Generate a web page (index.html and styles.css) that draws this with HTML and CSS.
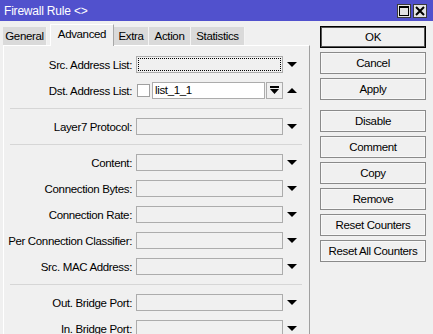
FILE: index.html
```html
<!DOCTYPE html>
<html lang="en">
<head>
    <meta charset="UTF-8">
    <title>Firewall Rule</title>
    <link rel="stylesheet" href="styles.css">
</head>
<body>
    <div class="window">
        <div class="titlebar">
            <span class="title">Firewall Rule &lt;&gt;</span>
            <div class="win-buttons">
                <span class="win-btn">
                    <svg width="10" height="10" viewBox="0 0 10 10"><rect x="0.5" y="0.5" width="9" height="9" fill="none" stroke="#000" stroke-width="1"/><rect x="0" y="0" width="10" height="2" fill="#000"/></svg>
                </span>
                <span class="win-btn">
                    <svg width="10" height="10" viewBox="0 0 10 10"><path d="M1 1 L9 9 M9 1 L1 9" stroke="#000" stroke-width="2"/></svg>
                </span>
            </div>
        </div>

        <div class="main">
            <div class="left">
                <div class="tabs">
                    <div class="tab tab-general">General</div>
                    <div class="tab tab-advanced active">Advanced</div>
                    <div class="tab tab-extra">Extra</div>
                    <div class="tab tab-action">Action</div>
                    <div class="tab tab-stats">Statistics</div>
                </div>

                <div class="panel">
                    <div class="row">
                        <label>Src. Address List:</label>
                        <div class="field focused"></div>
                        <span class="arrow"><svg width="10" height="6" viewBox="0 0 10 6"><polygon points="0,0 10,0 5,5" fill="#000"/></svg></span>
                    </div>
                    <div class="row">
                        <label>Dst. Address List:</label>
                        <div class="combo">
                            <span class="check"></span>
                            <div class="field white">list_1_1</div>
                            <span class="mini-btn"><svg width="9" height="9" viewBox="0 0 9 9"><rect x="0" y="0" width="9" height="2" fill="#000"/><polygon points="0,3 9,3 4.5,8" fill="#000"/></svg></span>
                        </div>
                        <span class="arrow"><svg width="10" height="6" viewBox="0 0 10 6"><polygon points="0,5 10,5 5,0" fill="#000"/></svg></span>
                    </div>

                    <div class="sep"></div>

                    <div class="row">
                        <label>Layer7 Protocol:</label>
                        <div class="field"></div>
                        <span class="arrow"><svg width="10" height="6" viewBox="0 0 10 6"><polygon points="0,0 10,0 5,5" fill="#000"/></svg></span>
                    </div>

                    <div class="sep"></div>

                    <div class="row">
                        <label>Content:</label>
                        <div class="field"></div>
                        <span class="arrow"><svg width="10" height="6" viewBox="0 0 10 6"><polygon points="0,0 10,0 5,5" fill="#000"/></svg></span>
                    </div>
                    <div class="row">
                        <label>Connection Bytes:</label>
                        <div class="field"></div>
                        <span class="arrow"><svg width="10" height="6" viewBox="0 0 10 6"><polygon points="0,0 10,0 5,5" fill="#000"/></svg></span>
                    </div>
                    <div class="row">
                        <label>Connection Rate:</label>
                        <div class="field"></div>
                        <span class="arrow"><svg width="10" height="6" viewBox="0 0 10 6"><polygon points="0,0 10,0 5,5" fill="#000"/></svg></span>
                    </div>
                    <div class="row">
                        <label>Per Connection Classifier:</label>
                        <div class="field"></div>
                        <span class="arrow"><svg width="10" height="6" viewBox="0 0 10 6"><polygon points="0,0 10,0 5,5" fill="#000"/></svg></span>
                    </div>
                    <div class="row">
                        <label>Src. MAC Address:</label>
                        <div class="field"></div>
                        <span class="arrow"><svg width="10" height="6" viewBox="0 0 10 6"><polygon points="0,0 10,0 5,5" fill="#000"/></svg></span>
                    </div>

                    <div class="sep"></div>

                    <div class="row">
                        <label>Out. Bridge Port:</label>
                        <div class="field"></div>
                        <span class="arrow"><svg width="10" height="6" viewBox="0 0 10 6"><polygon points="0,0 10,0 5,5" fill="#000"/></svg></span>
                    </div>
                    <div class="row">
                        <label>In. Bridge Port:</label>
                        <div class="field"></div>
                        <span class="arrow"><svg width="10" height="6" viewBox="0 0 10 6"><polygon points="0,0 10,0 5,5" fill="#000"/></svg></span>
                    </div>
                </div>
            </div>

            <div class="actions">
                <button class="btn default">OK</button>
                <button class="btn">Cancel</button>
                <button class="btn">Apply</button>
                <button class="btn spaced">Disable</button>
                <button class="btn">Comment</button>
                <button class="btn">Copy</button>
                <button class="btn">Remove</button>
                <button class="btn">Reset Counters</button>
                <button class="btn">Reset All Counters</button>
            </div>
        </div>
    </div>
</body>
</html>
```

FILE: styles.css
```css
* {
    margin: 0;
    padding: 0;
    box-sizing: border-box;
}

body {
    font-family: 'Liberation Sans', Arial, sans-serif;
    font-size: 11.5px;
    letter-spacing: -0.35px;
    color: #000;
    background: #f0f0f0;
}

.window {
    width: 433px;
    height: 334px;
    overflow: hidden;
    background: #f0f0f0;
}

.titlebar {
    height: 21px;
    background: #5151cd;
    color: #fff;
    display: flex;
    align-items: center;
    justify-content: space-between;
    padding: 0 6px 0 4px;
}

.title {
    font-size: 12px;
    letter-spacing: -0.2px;
}

.win-buttons {
    display: flex;
    gap: 2px;
}

.win-btn {
    width: 14px;
    height: 14px;
    background: #e4e4e4;
    border: 1px solid #3a3a3a;
    display: flex;
    align-items: center;
    justify-content: center;
}

.main {
    display: flex;
    padding-left: 3px;
}

.left {
    width: 307px;
}

/* tabs */
.tabs {
    display: flex;
    align-items: flex-end;
    height: 24px;
    padding-top: 2px;
}

.tab {
    height: 18px;
    line-height: 18px;
    background: #dadada;
    border-right: 1px solid #f4f4f4;
    text-align: center;
}

.tab.active {
    height: 22px;
    line-height: 19px;
    background: #f0f0f0;
    border-top: 1px solid #fff;
    border-left: 1px solid #fff;
    border-right: 1px solid #a8a8a8;
    margin-bottom: -1px;
    position: relative;
    z-index: 1;
}

.tab-general { width: 44px; margin-right: 3px; }
.tab-advanced { width: 64px; }
.tab-extra { width: 35px; }
.tab-action { width: 42px; }
.tab-stats { width: 54px; }

/* panel */
.panel {
    height: 300px;
    border-top: 1px solid #fff;
    border-left: 1px solid #fff;
    border-right: 1px solid #a0a0a0;
    padding-top: 10px;
}

.row {
    display: grid;
    grid-template-columns: 128px 147px 10px;
    column-gap: 4px;
    align-items: center;
    height: 17px;
    margin-bottom: 9px;
}

.row label {
    text-align: right;
    white-space: nowrap;
}

.field {
    height: 17px;
    border: 1px solid #acacac;
    background: #f0f0f0;
    line-height: 15px;
    padding-left: 2px;
}

.field.white {
    background: #fff;
    flex: 1;
}

.field.focused {
    outline: 1px dotted #000;
    outline-offset: -3px;
}

.combo {
    display: flex;
    align-items: center;
    height: 17px;
}

.check {
    width: 13px;
    height: 13px;
    margin: 0 2px 0 1px;
    border: 1px solid #a0a0a0;
    background: #fff;
}

.mini-btn {
    width: 17px;
    height: 17px;
    margin-left: 1px;
    border: 1px solid #acacac;
    background: #f0f0f0;
    display: flex;
    align-items: center;
    justify-content: center;
}

.arrow {
    display: flex;
    align-items: center;
    height: 17px;
}

.sep {
    height: 1px;
    background: #d6d6d6;
    margin: 0 7px 9px 6px;
}

/* right column */
.actions {
    display: flex;
    flex-direction: column;
    gap: 4px;
    width: 106px;
    margin-left: 10px;
    padding-top: 5px;
}

.btn {
    height: 22px;
    font-family: inherit;
    font-size: 11.5px;
    letter-spacing: -0.35px;
    color: #000;
    background: #f0f0f0;
    border: 1px solid #8a8a8a;
    box-shadow: inset 0 0 0 1px #f8f8f8;
}

.btn.default {
    border: 1px solid #000;
    box-shadow: inset 0 0 0 1px #555;
}

.btn.spaced {
    margin-top: 6px;
}
```
